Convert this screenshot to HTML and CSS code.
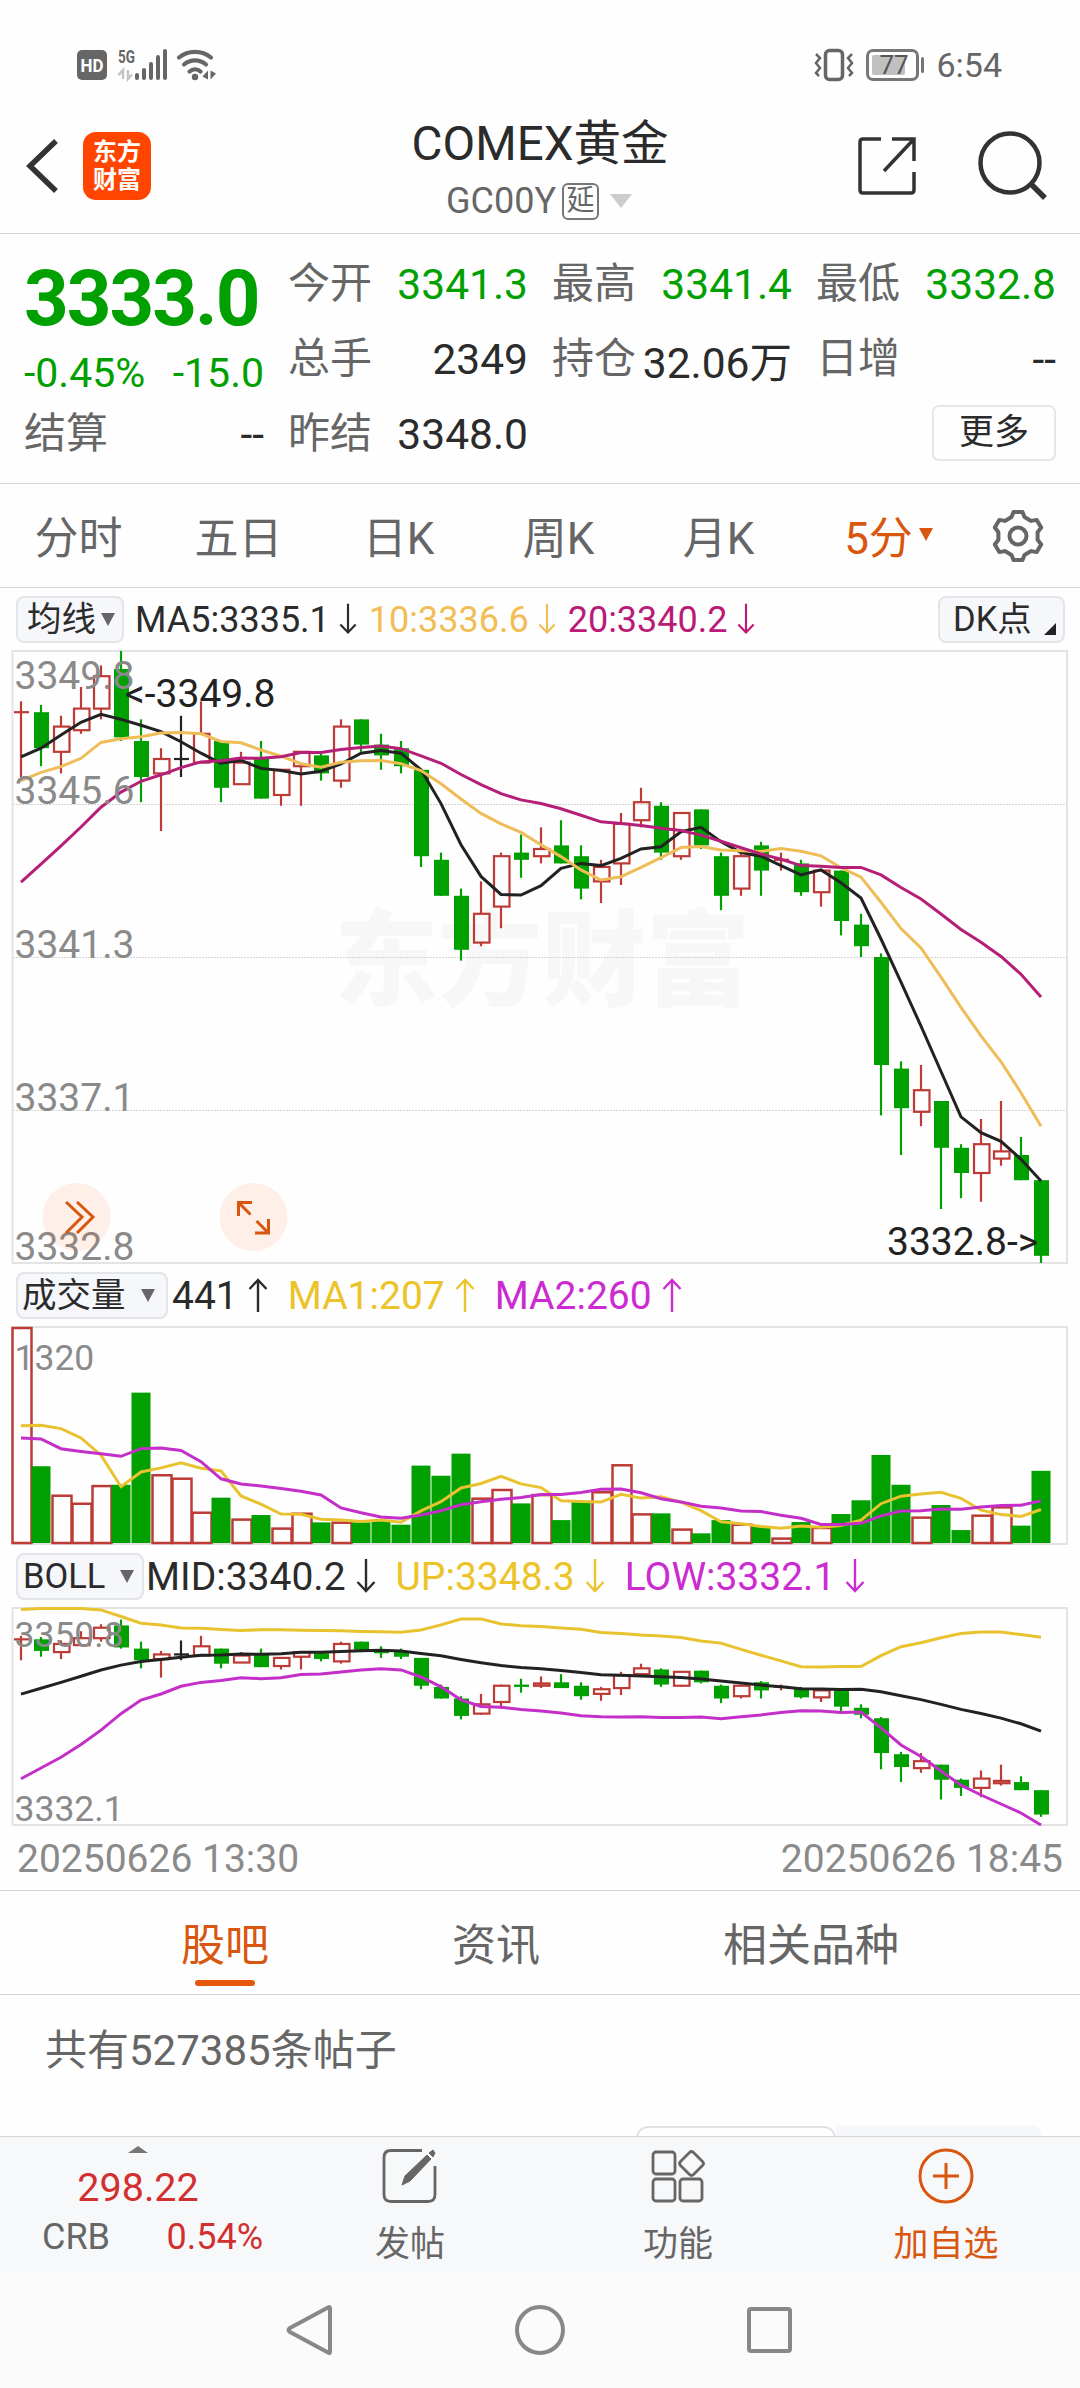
FILE: index.html
```html
<!DOCTYPE html>
<html lang="zh-CN">
<head>
  <meta charset="UTF-8" />
  <meta name="viewport" content="width=device-width, initial-scale=1.0"/>
  <title>COMEX黄金 GC00Y</title>
  <link rel="stylesheet" href="styles.css">
</head>
<body>
  <div class="status-bar">
    <svg class="status-left" width="145" height="36" viewBox="0 0 145 36">
      <rect x="0" y="3" width="30" height="30" rx="5" fill="#666"/>
      <text x="3.500" y="24.500" class="hd" textLength="23" lengthAdjust="spacingAndGlyphs">HD</text>
      <text x="41" y="15.500" class="net" textLength="17" lengthAdjust="spacingAndGlyphs">5G</text>
      <path d="M46 32V23l-4.500 5M51 23v9l4-4.500" fill="none" stroke="#c4c4c4" stroke-width="2.500"/>
      <path d="M60 28v3M67 23v8M74 17v14M81 10v21M88 4v27" stroke="#666" stroke-width="4" stroke-linecap="round"/>
      <g fill="none" stroke="#666" stroke-width="4.200" stroke-linecap="round">
        <path d="M102 10.500c9-7.500 23-7.500 32 0"/>
        <path d="M107 17.500c6.500-5.500 15.500-5.500 22 0"/>
        <path d="M112.500 24.500c3.500-3 8-3 11 0"/>
      </g>
      <circle cx="118" cy="30" r="3.200" fill="#666"/>
      <path d="M131 32.500V23.500l-5.500 6zM133.500 23.500v9l5.500-6z" fill="#666"/>
    </svg>
    <div class="status-right">
      <svg width="40" height="36" viewBox="0 0 40 36" fill="none" stroke="#666">
        <rect x="11.500" y="3.500" width="17" height="29" rx="4" stroke-width="3.500"/>
        <path d="M2 7l4 4-4 5 4 5-4 5 3 3M38 7l-4 4 4 5-4 5 4 5-3 3" stroke-width="2.500"/>
      </svg>
      <div class="battery"><span>77</span></div>
      <span class="clock">6:54</span>
    </div>
  </div>

  <header class="header">
    <div class="header-left">
      <svg width="34" height="56" viewBox="0 0 34 56" fill="none" stroke="#333" stroke-width="5.500">
        <path d="M32 3L6 28l26 25"/>
      </svg>
      <div class="logo"><span>东方</span><span>财富</span></div>
    </div>
    <div class="title">
      <h1>COMEX黄金</h1>
      <div class="code">GC00Y<span class="delay">延</span><i class="tri tri-light"></i></div>
    </div>
    <div class="header-right">
      <svg width="60" height="60" viewBox="0 0 60 60" fill="none" stroke="#333" stroke-width="3.500">
        <path d="M24 3H6q-3 0-3 3v48q0 3 3 3h48q3 0 3-3V36M35 3h22v22M57 3L27 35"/>
      </svg>
      <svg width="70" height="70" viewBox="0 0 70 70" fill="none" stroke="#333" stroke-width="4.500">
        <circle cx="32" cy="32" r="29.500"/>
        <path d="M54 54l13 13" stroke-width="5.500"/>
      </svg>
    </div>
  </header>

  <section class="quote">
    <div class="price-cell">
      <div class="price">3333.0</div>
      <div class="change"><span>-0.45%</span><span>-15.0</span></div>
    </div>
    <div class="cell"><label>今开</label><b class="down">3341.3</b></div>
    <div class="cell"><label>最高</label><b class="down">3341.4</b></div>
    <div class="cell"><label>最低</label><b class="down">3332.8</b></div>
    <div class="cell"><label>总手</label><b>2349</b></div>
    <div class="cell"><label>持仓</label><b>32.06万</b></div>
    <div class="cell"><label>日增</label><b>--</b></div>
    <div class="cell"><label>结算</label><b>--</b></div>
    <div class="cell"><label>昨结</label><b>3348.0</b></div>
    <div class="cell"></div>
    <div class="cell cell-more"><span class="more">更多</span></div>
  </section>

  <nav class="periods">
    <span>分时</span>
    <span>五日</span>
    <span>日K</span>
    <span>周K</span>
    <span>月K</span>
    <span class="active">5分<i class="tri tri-orange"></i></span>
    <svg width="56" height="56" viewBox="-28 -28 56 56" fill="none" stroke="#666" stroke-width="4" stroke-linejoin="round">
      <path d="M-6.500-18.900L-4.500-24H4.500L6.500-18.900 13.100-15.100 18.700-16.100 23.200-8.400 19.600-3.800V3.800L23.200 8.400 18.700 16.100 13.100 15.100 6.500 18.900 4.500 24H-4.500L-6.500 18.900-13.100 15.100-18.700 16.100-23.200 8.400-19.600 3.800V-3.800L-23.200-8.400-18.700-16.100-13.100-15.100z"/>
      <circle r="8.500"/>
    </svg>
  </nav>

  <section class="charts">
    <div class="indicator ind-ma">
      <span class="chip">均线<i class="tri"></i></span>
      <span class="ind c-black">MA5:3335.1<svg class="arrow"><use href="#arrow-down"/></svg></span>
      <span class="ind c-orange">10:3336.6<svg class="arrow"><use href="#arrow-down"/></svg></span>
      <span class="ind c-magenta">20:3340.2<svg class="arrow"><use href="#arrow-down"/></svg></span>
      <span class="chip chip-dk">DK点<i class="corner"></i></span>
    </div>
    <svg id="priceChart" width="1080" height="614"></svg>

    <div class="indicator ind-vol">
      <span class="chip">成交量<i class="tri"></i></span>
      <span class="ind c-black">441<svg class="arrow"><use href="#arrow-up"/></svg></span>
      <span class="ind c-yellow">MA1:207<svg class="arrow"><use href="#arrow-up"/></svg></span>
      <span class="ind c-purple">MA2:260<svg class="arrow"><use href="#arrow-up"/></svg></span>
    </div>
    <svg id="volumeChart" width="1080" height="219"></svg>

    <div class="indicator ind-boll">
      <span class="chip">BOLL<i class="tri"></i></span>
      <span class="ind c-black">MID:3340.2<svg class="arrow"><use href="#arrow-down"/></svg></span>
      <span class="ind c-yellow">UP:3348.3<svg class="arrow"><use href="#arrow-down"/></svg></span>
      <span class="ind c-purple">LOW:3332.1<svg class="arrow"><use href="#arrow-down"/></svg></span>
    </div>
    <svg id="bollChart" width="1080" height="219"></svg>

    <div class="dates"><span>20250626 13:30</span><span>20250626 18:45</span></div>
  </section>

  <nav class="news-tabs">
    <span class="active">股吧</span>
    <span>资讯</span>
    <span>相关品种</span>
  </nav>

  <section class="posts">
    <p>共有527385条帖子</p>
    <div class="sort"><span class="sort-on"></span><span class="sort-off"></span></div>
  </section>

  <footer class="toolbar">
    <div class="index">
      <i class="tri tri-up"></i>
      <div class="index-price">298.22</div>
      <div class="index-row"><span>CRB</span><span class="up">0.54%</span></div>
    </div>
    <div class="tool">
      <svg width="56" height="56" viewBox="0 0 56 56" fill="none" stroke="#666" stroke-width="2.800">
        <path d="M40 2.500H9q-7 0-7 7v37q0 7 7 7h37q7 0 7-7V18"/>
        <path d="M20 37l3-9L45 7l4 4-21 22zM47 5l4-3 2 3-2 4z" fill="#666" stroke-width="1"/>
      </svg>
      <span>发帖</span>
    </div>
    <div class="tool">
      <svg width="56" height="56" viewBox="0 0 56 56" fill="none" stroke="#666" stroke-width="2.800">
        <rect x="3" y="4" width="22" height="22" rx="3"/>
        <rect x="3" y="31" width="22" height="22" rx="3"/>
        <rect x="30" y="31" width="22" height="22" rx="3"/>
        <path d="M39.500 4.500q2-2 4 0l9 9q2 2 0 4l-9 9q-2 2-4 0l-9-9q-2-2 0-4z"/>
      </svg>
      <span>功能</span>
    </div>
    <div class="tool tool-add">
      <svg width="56" height="56" viewBox="0 0 56 56" fill="none" stroke="#d9560f" stroke-width="3">
        <circle cx="28" cy="28" r="26"/>
        <path d="M28 15v26M15 28h26"/>
      </svg>
      <span>加自选</span>
    </div>
  </footer>

  <div class="system-nav">
    <svg width="52" height="52" viewBox="0 0 52 52"><path d="M46 4v44q0 2-2 .5L6 28q-3-2 0-4L44 3.500q2-1 2 .5z"/></svg>
    <svg width="52" height="52" viewBox="0 0 52 52"><circle cx="26" cy="26" r="23"/></svg>
    <svg width="52" height="52" viewBox="0 0 52 52"><rect x="5" y="5" width="41" height="42" rx="2"/></svg>
  </div>

  <svg width="0" height="0" class="defs">
    <symbol id="arrow-down" viewBox="0 0 20 34"><path d="M10 0v31M1.500 23L10 32l8.500-9" fill="none" stroke="currentColor" stroke-width="2.400"/></symbol>
    <symbol id="arrow-up" viewBox="0 0 20 34"><path d="M10 34V3M1.500 11L10 2l8.500 9" fill="none" stroke="currentColor" stroke-width="2.400"/></symbol>
  </svg>

  <script src="chart.js"></script>
</body>
</html>
```
FILE: styles.css
```css
* {
  box-sizing: border-box;
}

body {
  margin: 0;
  width: 1080px;
  height: 2388px;
  overflow: hidden;
  background: #fefefe;
  color: #2b2b2b;
  font-family: Roboto, 'Noto Sans CJK SC', sans-serif;
  display: flex;
  flex-direction: column;
}

svg {
  display: block;
  flex: none;
  overflow: visible;
}

.defs {
  position: absolute;
}

/* status bar */
.status-bar {
  height: 105px;
  padding: 47px 78px 0 77px;
  display: flex;
  justify-content: space-between;
}

.hd {
  font-size: 18px;
  font-weight: 700;
  fill: #fff;
}

.net {
  font-size: 18px;
  font-weight: 700;
  fill: #666;
}

.status-right {
  display: flex;
  align-items: center;
  height: 36px;
}

.battery {
  position: relative;
  width: 53px;
  height: 32px;
  margin: 0 17px 0 12px;
  padding: 3px;
  border: 3px solid #777;
  border-radius: 7px;
}

.battery span {
  display: block;
  width: 33px;
  height: 20px;
  padding-left: 7px;
  background: #c0c0c0;
  border-radius: 2px;
  color: #555;
  font-size: 26px;
  line-height: 21px;
}

.battery::after {
  content: '';
  position: absolute;
  right: -8px;
  top: 5px;
  width: 3px;
  height: 16px;
  border-radius: 2px;
  background: #777;
}

.clock {
  font-size: 34px;
  color: #666;
}

/* header */
.header {
  height: 129px;
  padding: 0 33px 0 24px;
  border-bottom: 1px solid #d5d5d5;
  display: flex;
  justify-content: space-between;
}

.header-left,
.header-right {
  display: flex;
  align-items: center;
  width: 190px;
  height: 122px;
}

.header-left {
  width: 199px;
  gap: 25px;
}

.header-right {
  gap: 61px;
}

.logo {
  width: 68px;
  height: 68px;
  border-radius: 13px;
  background: #ff4500;
  color: #fff;
  font-size: 24px;
  font-weight: 700;
  line-height: 28px;
  padding-top: 6px;
  display: flex;
  flex-direction: column;
  align-items: center;
}

.title {
  text-align: center;
}

.title h1 {
  margin: 11px 0 0;
  font-size: 47.5px;
  font-weight: 400;
  line-height: 56px;
}

.code {
  display: flex;
  align-items: center;
  justify-content: center;
  height: 44px;
  margin-top: 7px;
  padding-right: 2px;
  font-size: 36px;
  color: #666;
}

.delay {
  width: 37px;
  height: 37px;
  margin-left: 6px;
  border: 2px solid #777;
  border-radius: 6px;
  font-size: 28px;
  line-height: 32px;
}

.tri {
  display: inline-block;
  border: 7.5px solid transparent;
  border-top: 13px solid #666;
  border-bottom: 0;
}

.tri-light {
  margin-left: 11px;
  border-width: 14px 11px 0;
  border-top-color: #ccc;
}

.tri-orange {
  margin: 0 0 1px 6px;
  border-top-color: #d9560f;
}

/* quote */
.quote {
  height: 250px;
  padding: 13px 24px 0;
  border-bottom: 1px solid #d5d5d5;
  display: grid;
  grid-template-columns: repeat(4, 240px);
  grid-template-rows: repeat(3, 75px);
  column-gap: 24px;
}

.price-cell {
  grid-row: span 2;
  color: #00a000;
}

.price {
  font-size: 78px;
  font-weight: 700;
  line-height: 78px;
  letter-spacing: -2px;
  padding-top: 13px;
}

.change {
  display: flex;
  justify-content: space-between;
  font-size: 41px;
  line-height: 50px;
  padding-top: 10px;
}

.cell {
  display: flex;
  align-items: center;
  justify-content: space-between;
  font-size: 42px;
  white-space: nowrap;
}

.cell label {
  color: #666;
  line-height: 54px;
  margin-top: -2px;
}

.cell b {
  font-size: 42.5px;
  font-weight: 400;
}

.cell .down {
  color: #00a000;
}

.cell-more {
  justify-content: flex-end;
}

.more {
  width: 124px;
  height: 56px;
  margin-top: -4px;
  border: 2px solid #e6e6e6;
  border-radius: 7px;
  font-size: 35px;
  line-height: 51px;
  text-align: center;
}

/* period tabs */
.periods {
  height: 104px;
  border-bottom: 1px solid #d5d5d5;
  display: flex;
  align-items: center;
  color: #666;
  font-size: 44px;
}

.periods span {
  width: 160px;
  padding: 0 3px 2px 0;
  display: flex;
  align-items: center;
  justify-content: center;
}

.periods .active {
  width: 180px;
  color: #d9560f;
}

.periods svg {
  margin-left: 10px;
}

/* charts */
.indicator {
  height: 62px;
  padding: 0 15px 0 16px;
  display: flex;
  align-items: center;
  white-space: nowrap;
}

.chip {
  height: 47px;
  border: 2px solid #e3e5e9;
  border-radius: 8px;
  background: #f6f7fa;
  font-size: 34.5px;
  display: flex;
  align-items: center;
  line-height: 40px;
}

.ind {
  display: flex;
  align-items: center;
  padding-top: 2px;
  font-size: 39px;
}

.arrow {
  width: 20px;
  height: 34px;
  margin: -2px 0 0 10px;
}

.ind-ma .ind {
  font-size: 36px;
}

.ind-ma .arrow {
  width: 18px;
  height: 32px;
  margin: -2px 12px 0 9px;
}

.ind-ma .chip {
  width: 108px;
  padding-left: 9px;
  margin-right: 11px;
}

.ind-ma .tri {
  margin-left: 5px;
}

.ind-ma .chip-dk {
  width: 127px;
  margin: 0 0 0 auto;
  padding-left: 13px;
}

.corner {
  margin: 20px 0 0 12px;
  border-left: 12px solid transparent;
  border-bottom: 12px solid #222;
}

.ind-vol .ind,
.ind-boll .ind {
  margin-right: 20px;
}

.ind-vol .chip {
  width: 152px;
  padding-left: 4px;
  margin-right: 4px;
}

.ind-boll .chip {
  width: 128px;
  padding-left: 5px;
  margin-right: 2px;
}

.ind-vol .tri,
.ind-boll .tri {
  margin-left: 15px;
}

.c-black { color: #2b2b2b; }
.c-orange { color: #f3bd55; }
.c-magenta { color: #b91b77; }
.c-yellow { color: #ecc328; }
.c-purple { color: #cb2bd1; }

.axis {
  font-size: 39px;
  fill: #8a8a8a;
}

.axis-small {
  font-size: 35.5px;
}

.mark {
  font-size: 39px;
  fill: #222;
}

.watermark {
  font-size: 104px;
  font-weight: 900;
  fill: #f7f7f7;
}

.dates {
  height: 64px;
  padding: 2px 17px 0;
  display: flex;
  align-items: center;
  justify-content: space-between;
  font-size: 39px;
  color: #8a8a8a;
}

/* news */
.news-tabs {
  height: 105px;
  padding: 0 181px;
  border-top: 1px solid #d5d5d5;
  border-bottom: 1px solid #d5d5d5;
  display: flex;
  gap: 183px;
  font-size: 44px;
  line-height: 110px;
  color: #666;
}

.news-tabs .active {
  position: relative;
  color: #d9560f;
}

.news-tabs .active::after {
  content: '';
  position: absolute;
  left: 14px;
  top: 89px;
  width: 60px;
  height: 6px;
  border-radius: 3px;
  background: #e6570a;
}

.posts {
  height: 141px;
  display: flex;
  flex-direction: column;
  justify-content: space-between;
}

.posts p {
  margin: 29px 0 0 45px;
  font-size: 42px;
  line-height: 54px;
  color: #666;
}

.sort {
  display: flex;
  height: 11px;
  padding-left: 636px;
  overflow: hidden;
}

.sort-on {
  width: 200px;
  height: 40px;
  margin-top: 1px;
  border: 2px solid #e2e2e2;
  border-radius: 12px;
}

.sort-off {
  width: 206px;
  height: 40px;
  border-radius: 0 12px 12px 0;
  background: #f6f7fa;
}

/* bottom */
.toolbar {
  height: 137px;
  border-top: 1px solid #d5d5d5;
  background: #f7f8fa;
  display: flex;
  color: #666;
}

.index {
  width: 276px;
  display: flex;
  flex-direction: column;
  align-items: center;
}

.tri-up {
  margin-top: 9px;
  border-width: 0 10.5px 7px;
  border-bottom: 7px solid #777;
}

.index-price {
  margin-top: 10px;
  font-size: 39.5px;
  line-height: 50px;
  color: #d22f2f;
}

.index-row {
  display: flex;
  align-self: stretch;
  justify-content: space-between;
  padding: 0 13px 0 42px;
  font-size: 36px;
  line-height: 49px;
}

.up {
  color: #d22f2f;
}

.tool {
  width: 268px;
  padding-top: 11px;
  display: flex;
  flex-direction: column;
  align-items: center;
  font-size: 35px;
  line-height: 44px;
}

.tool span {
  margin-top: 19px;
}

.tool-add {
  color: #d9560f;
}

.system-nav {
  flex: 1;
  background: #fbfbfb;
  display: flex;
  justify-content: center;
  gap: 178px;
  padding-top: 31px;
}

.system-nav svg {
  fill: none;
  stroke: #888;
  stroke-width: 4;
}
```
FILE: chart.js
```js
// [open, close, high, low, volume], 5 minute bars, prices are offsets from 3300
const bars = [
  [48.1, 48.1, 48.4, 46.3, 1320], [48.1, 47.1, 48.3, 46.6, 469], [47.0, 47.7, 48.0, 46.4, 295],
  [47.6, 48.2, 48.8, 47.5, 246], [48.2, 49.1, 49.4, 47.9, 354], [49.3, 47.4, 49.8, 47.3, 356],
  [47.3, 46.3, 47.9, 45.6, 919], [46.4, 46.8, 47.1, 44.8, 420], [46.8, 46.8, 48.0, 46.3, 399],
  [46.7, 47.5, 48.4, 46.7, 191], [47.3, 46.0, 47.3, 45.6, 277], [46.1, 46.7, 47.0, 46.1, 149],
  [46.8, 45.7, 47.3, 45.7, 171], [45.8, 46.5, 46.5, 45.5, 94], [46.6, 47.0, 47.0, 45.5, 185],
  [46.9, 46.4, 47.0, 46.2, 126], [46.2, 47.7, 47.9, 46.0, 130], [47.9, 47.2, 47.9, 47.0, 126],
  [47.2, 46.9, 47.5, 46.5, 140], [47.1, 46.6, 47.3, 46.4, 112], [46.5, 44.1, 46.5, 43.8, 473],
  [44.0, 43.0, 44.2, 43.0, 411], [43.0, 41.5, 43.2, 41.2, 546], [41.7, 42.5, 43.4, 41.6, 277],
  [42.7, 44.1, 44.2, 42.1, 330], [44.2, 44.0, 44.7, 43.5, 242], [44.1, 44.3, 44.9, 43.9, 299],
  [44.4, 43.9, 45.1, 43.9, 140], [44.1, 43.2, 44.4, 42.9, 253], [43.4, 43.8, 44.0, 42.8, 316],
  [43.9, 45.0, 45.3, 43.3, 481], [45.1, 45.6, 46.0, 44.9, 181], [45.5, 44.2, 45.6, 44.0, 181],
  [44.1, 45.3, 45.3, 44.0, 88], [45.4, 44.4, 45.4, 44.3, 59], [44.1, 43.0, 44.2, 42.6, 140],
  [43.2, 44.1, 44.2, 43.0, 118], [44.4, 43.7, 44.5, 43.0, 102], [44.0, 44.0, 44.2, 43.7, 33],
  [43.9, 43.1, 44.0, 43.0, 128], [43.1, 43.7, 43.7, 42.7, 98], [43.7, 42.3, 43.7, 41.9, 177],
  [42.2, 41.6, 42.5, 41.3, 261], [41.3, 38.3, 41.4, 36.9, 538], [38.2, 37.1, 38.4, 35.8, 356],
  [37.0, 37.6, 38.3, 36.6, 161], [37.3, 36.0, 37.3, 34.3, 232], [36.0, 35.3, 36.1, 34.6, 79],
  [35.3, 36.1, 36.8, 34.5, 173], [35.7, 35.9, 37.3, 35.5, 224], [35.8, 35.1, 36.3, 35.1, 106],
  [35.1, 33.0, 35.1, 32.8, 441]
];

// averages for the first bars, whose history is off screen
const lead = {
  ma5: [46.86, 47.1, 47.47, 47.82],
  ma10: [46.2, 46.43, 46.59, 46.82, 47.26, 47.36, 47.42, 47.52, 47.54],
  ma20: [43.38, 43.88, 44.39, 44.91, 45.46, 45.88, 46.18, 46.36, 46.56, 46.72, 46.75, 46.83, 46.82, 46.86, 46.98, 46.98, 47.06, 47.12, 47.16],
  low: [36.09, 37.01, 37.93, 39.05, 40.28, 41.69, 42.87, 43.39, 44.05, 44.39, 44.54, 44.79, 44.71, 44.79, 45.08, 45.11, 45.28, 45.46, 45.57],
  vol5: [717, 719, 699, 642],
  vol10: [642, 636, 576, 560, 546, 530, 576, 581, 566]
};

const RED = '#bd3b36';
const GREEN = '#00a000';
const BLACK = '#222';
const xOf = i => 21 + i * 20;

function average(values, n, first) {
  return values.map((v, i) => {
    if (i < first.length) return first[i];
    return values.slice(i - n + 1, i + 1).reduce((a, b) => a + b, 0) / n;
  });
}

function frame(height) {
  return `<rect x="12.5" y="1" width="1054.5" height="${height}" fill="none" stroke="#e3e3e3" stroke-width="2"/>`;
}

function line(values, y, color) {
  const points = values.map((v, i) => `${xOf(i)},${y(v).toFixed(1)}`).join(' ');
  return `<polyline points="${points}" fill="none" stroke="${color}" stroke-width="3"/>`;
}

function label(x, y, text, cls) {
  return `<text x="${x}" y="${y}" class="${cls}">${text}</text>`;
}

function candles(y) {
  return bars.map(([open, close, high, low], i) => {
    const x = xOf(i);
    const top = y(Math.max(open, close));
    const bottom = y(Math.min(open, close));
    const flat = open === close;
    const color = i === 8 ? BLACK : close < open ? GREEN : RED;
    const wick = (a, b) => `<path d="M${x} ${a}V${b}" stroke="${color}" stroke-width="2.2"/>`;
    if (flat) {
      return wick(y(high), y(low)) + `<path d="M${x - 7} ${top}h15" stroke="${color}" stroke-width="2.2"/>`;
    }
    if (close < open) {
      return wick(y(high), y(low)) + `<rect x="${x - 7}" y="${top}" width="15" height="${bottom - top}" fill="${color}"/>`;
    }
    return wick(y(high), top) + wick(bottom, y(low)) +
      `<rect x="${x - 7}" y="${top}" width="15.5" height="${bottom - top}" fill="none" stroke="${color}" stroke-width="2.2"/>`;
  }).join('');
}

const closes = bars.map(b => b[1]);
const ma5 = average(closes, 5, lead.ma5);
const ma10 = average(closes, 10, lead.ma10);
const ma20 = average(closes, 20, lead.ma20);

function drawPrice() {
  const y = p => 1 + (49.8 - p) * 36;
  let out = label(334, 348, '东方财富', 'watermark');
  out += frame(612);
  [154.5, 307.5, 460.5].forEach(g => {
    out += `<path d="M13 ${g}H1067" stroke="#d4d4d4" stroke-width="1" stroke-dasharray="2 1"/>`;
  });
  out += candles(y);
  out += line(ma5, y, BLACK) + line(ma10, y, '#efbd58') + line(ma20, y, '#b51f78');
  out += label(14.5, 38.5, '3349.8', 'axis') + label(14.5, 153.5, '3345.6', 'axis') + label(14.5, 308, '3341.3', 'axis');
  out += label(14.5, 461, '3337.1', 'axis') + label(14.5, 610, '3332.8', 'axis');
  out += label(125, 56.5, '&lt;-3349.8', 'mark') + label(887, 605, '3332.8-&gt;', 'mark');
  // overlay buttons
  out += '<g fill="#ff5a10" fill-opacity="0.09"><circle cx="76.5" cy="567" r="34"/><circle cx="253.5" cy="567" r="34"/></g>';
  out += '<g fill="none" stroke="#d9560f" stroke-width="3"><path d="M66 552l16 15-16 16M77 552l16 15-16 16"/>' +
    '<path d="M252 552.5h-13.5v13.5M238.5 552.5l12 12M255 583h13.5v-14M268.5 583l-12-12"/></g>';
  document.getElementById('priceChart').innerHTML = out;
}

function drawVolume() {
  const y = v => 217 - v * 216 / 1320;
  let out = frame(217);
  bars.forEach(([open, close, , , vol], i) => {
    const x = xOf(i);
    const top = y(vol);
    if (close < open) {
      out += `<rect x="${x - 9.5}" y="${top}" width="19" height="${217 - top}" fill="${GREEN}"/>`;
    } else {
      out += `<rect x="${x - 8.5}" y="${top + 1}" width="19" height="${216 - top}" fill="#fefefe" stroke="${RED}" stroke-width="2.5"/>`;
    }
  });
  const vols = bars.map(b => b[4]);
  out += line(average(vols, 5, lead.vol5), y, '#e9c22f') + line(average(vols, 10, lead.vol10), y, '#c32fc8');
  out += label(14.5, 43.5, '1320', 'axis axis-small');
  document.getElementById('volumeChart').innerHTML = out;
}

function drawBoll() {
  const y = p => Math.max(1.5, 1 + (50.8 - p) * 217 / 18.7);
  const low = closes.map((c, i) => {
    if (i < lead.low.length) return lead.low[i];
    const sum = closes.slice(i - 19, i + 1).reduce((a, v) => a + (v - ma20[i]) ** 2, 0);
    return ma20[i] - 2 * Math.sqrt(sum / 19);
  });
  const up = low.map((v, i) => 2 * ma20[i] - v);
  let out = frame(217) + candles(y);
  out += line(up, y, '#e9c22f') + line(ma20, y, BLACK) + line(low, y, '#c32fc8');
  out += label(14.5, 39.5, '3350.8', 'axis axis-small') + label(14.5, 213.5, '3332.1', 'axis axis-small');
  document.getElementById('bollChart').innerHTML = out;
}

drawPrice();
drawVolume();
drawBoll();
```
